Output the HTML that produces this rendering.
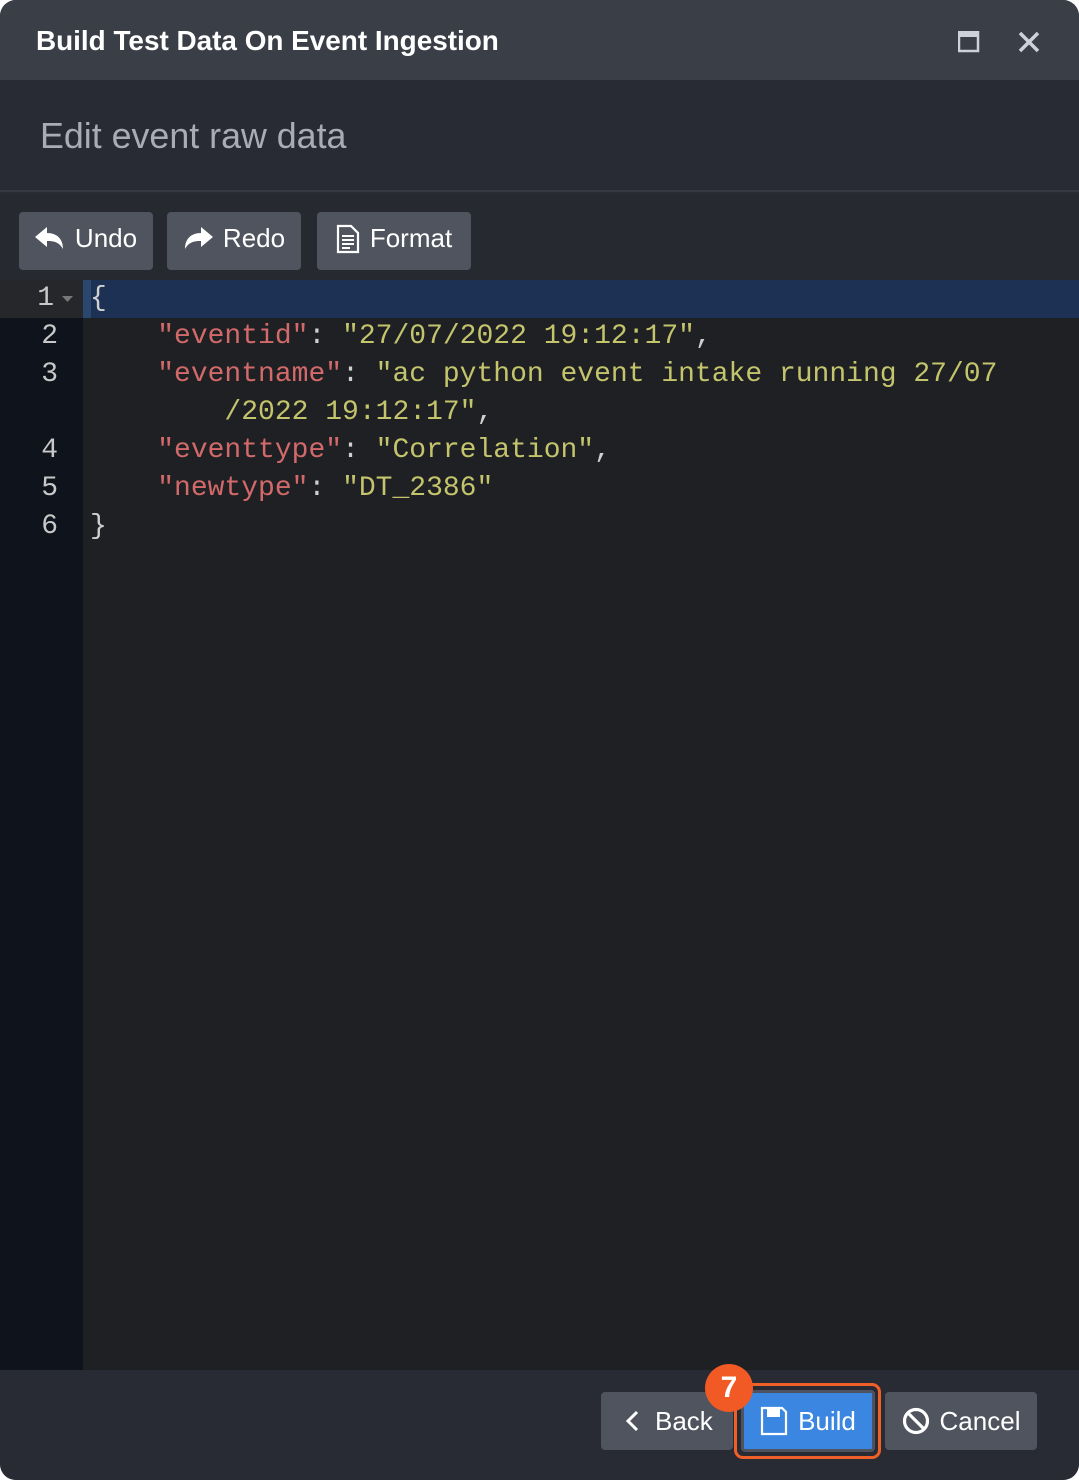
<!DOCTYPE html>
<html><head><meta charset="utf-8"><style>
*{margin:0;padding:0;box-sizing:border-box}
body{width:1079px;height:1480px;background:#fff;font-family:"Liberation Sans",sans-serif;overflow:hidden;position:relative}
.win{position:absolute;left:0;top:0;width:1079px;height:1480px;background:#282b33;border-radius:16px;overflow:hidden}
.title{position:absolute;left:0;top:0;width:100%;height:80px;background:#3a3e47}
.title h1{position:absolute;left:36px;top:25px;font-size:27.9px;font-weight:bold;color:#fff}
.hdr{position:absolute;left:0;top:80px;width:100%;height:112px;background:#282b33;border-bottom:2px solid #353841}
.hdr h2{position:absolute;left:40px;top:36px;font-size:35.8px;font-weight:normal;color:#a9acb4}
.tb{position:absolute;left:0;top:194px;width:100%;height:86px;background:#262930}
.btn{position:absolute;height:58px;background:#50545e;border-radius:4px;color:#fff;font-size:26px;display:flex;align-items:center;gap:10px;justify-content:center}
.tb .btn span{position:relative;top:-3px}
.ed{position:absolute;left:0;top:280px;width:100%;height:1090px;background:#1f2023}
.gut{position:absolute;left:0;top:0;width:83px;height:100%;background:#0f131c}
.mono{font-family:"Liberation Mono",monospace;font-size:28px;line-height:38px}
.ln{position:absolute;left:0;width:58px;text-align:right;color:#c8c8c8}
.cl{position:absolute;left:90px;white-space:pre;color:#d0d0d0}
.k{color:#d2696a}.s{color:#c3c46c}
.foot{position:absolute;left:0;top:1370px;width:100%;height:110px;background:#282b33}
</style></head><body><div class="win">
<div class="title"><h1>Build Test Data On Event Ingestion</h1>
<svg style="position:absolute;left:958px;top:31px" width="22" height="22"><rect x="1" y="1" width="19" height="19" fill="none" stroke="#cdd1db" stroke-width="2.5"/><rect x="1" y="1" width="19" height="5" fill="#cdd1db"/></svg>
<svg style="position:absolute;left:1018px;top:31px" width="22" height="22"><path d="M2 2L20 20M20 2L2 20" stroke="#cdd1db" stroke-width="3.5"/></svg>
</div>
<div class="hdr"><h2>Edit event raw data</h2></div>
<div class="tb">
<div class="btn" style="left:19px;top:18px;width:134px"><svg width="30" height="26" viewBox="0 0 30 26" style="position:relative;top:-3px"><path d="M0 12L12 2V8C22 8 28 14 28 24C24 17 19 16 12 16V22Z" fill="#fff"/></svg><span>Undo</span></div>
<div class="btn" style="left:167px;top:18px;width:134px"><svg width="30" height="26" viewBox="0 0 30 26" style="position:relative;top:-3px"><path d="M30 12L18 2V8C8 8 2 14 2 24C6 17 11 16 18 16V22Z" fill="#fff"/></svg><span>Redo</span></div>
<div class="btn" style="left:317px;top:18px;width:154px"><svg width="24" height="30" viewBox="0 0 24 30" style="position:relative;top:-2px"><path d="M2 2H15L22 9V28H2Z" fill="none" stroke="#fff" stroke-width="2.2"/><path d="M6 12H18M6 16H18M6 20H18M6 24H14" stroke="#fff" stroke-width="2"/></svg><span>Format</span></div>
</div>
<div class="ed mono">
<div class="gut"></div>
<div style="position:absolute;left:0;top:0;width:83px;height:38px;background:#25272b"></div>
<div style="position:absolute;left:83px;top:0;width:996px;height:38px;background:#1c3153;border-left:8px solid #2a4770"></div>
<div class="ln" style="top:0;width:54px">1</div><svg style="position:absolute;left:62px;top:16px" width="12" height="8"><path d="M0 0H11L5.5 6Z" fill="#777"/></svg>
<div class="ln" style="top:38px">2</div>
<div class="ln" style="top:76px">3</div>
<div class="ln" style="top:152px">4</div>
<div class="ln" style="top:190px">5</div>
<div class="ln" style="top:228px">6</div>
<div class="cl" style="top:0">{</div>
<div class="cl" style="top:38px">    <span class="k">"eventid"</span>: <span class="s">"27/07/2022 19:12:17"</span>,</div>
<div class="cl" style="top:76px">    <span class="k">"eventname"</span>: <span class="s">"ac python event intake running 27/07</span></div>
<div class="cl" style="top:114px">        <span class="s">/2022 19:12:17"</span>,</div>
<div class="cl" style="top:152px">    <span class="k">"eventtype"</span>: <span class="s">"Correlation"</span>,</div>
<div class="cl" style="top:190px">    <span class="k">"newtype"</span>: <span class="s">"DT_2386"</span></div>
<div class="cl" style="top:228px">}</div>
</div>
<div class="foot">
<div class="btn" style="left:601px;top:22px;width:132px;justify-content:flex-start;padding-left:24px;gap:16px"><svg width="14" height="22"><path d="M12 2L3 11L12 20" fill="none" stroke="#fff" stroke-width="3"/></svg>Back</div>
<div style="position:absolute;left:734px;top:13px;width:147px;height:76px;border:3px solid #ef5f28;border-radius:9px"></div>
<div class="btn" style="left:741px;top:20px;width:134px;height:62px;background:#3a86e0;border:3px solid #4f5360"><svg width="28" height="30" viewBox="0 0 28 30"><path d="M2 2H22L26 6V28H2Z" fill="none" stroke="#fff" stroke-width="2.2"/><rect x="7" y="2" width="13" height="9" fill="#fff"/></svg>Build</div>
<div class="btn" style="left:885px;top:22px;width:152px"><svg width="28" height="28"><circle cx="14" cy="14" r="11.5" fill="none" stroke="#fff" stroke-width="3.2"/><path d="M6 6L22 22" stroke="#fff" stroke-width="3.2"/></svg>Cancel</div>
<div style="position:absolute;left:705px;top:-6px;width:48px;height:48px;border-radius:50%;background:#f15a24;color:#fff;font-size:30px;font-weight:bold;text-align:center;line-height:48px">7</div>
</div>
</div></body></html>
